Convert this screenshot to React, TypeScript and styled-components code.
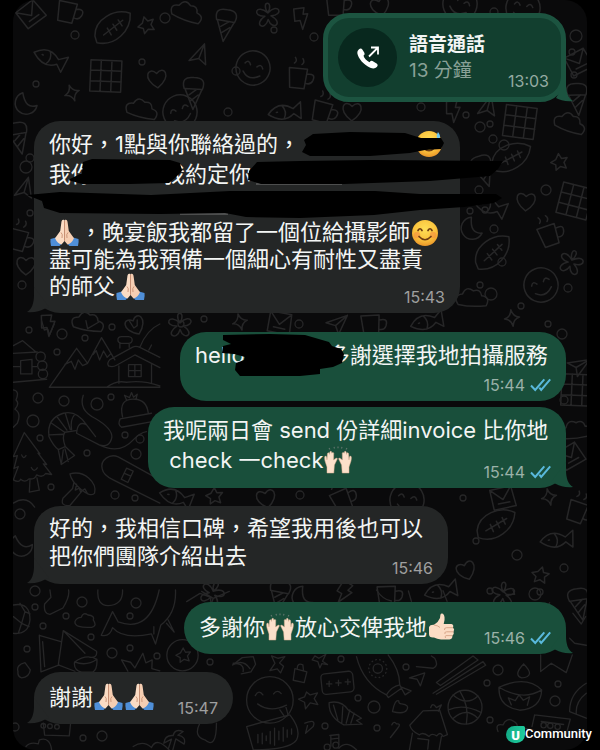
import React from "react";
import styled, { createGlobalStyle } from "styled-components";

const GREEN = "#194f3b";
const GREY = "#242626";

const GlobalStyle = createGlobalStyle`
  body {
    margin: 0;
    background: #000;
    font-family: Inter, "Noto Sans CJK TC", sans-serif;
    color: #f3f5f4;
  }
`;

const Screen = styled.main`
  position: relative;
  box-sizing: border-box;
  min-height: 100vh;
  padding: 0 13px;
  overflow: hidden;
`;

const Chat = styled.section`
  position: relative;
  box-sizing: border-box;
  min-height: 100vh;
  padding: 13px 21px 26px;
  border-radius: 22px;
  background: #0a0a0b;
  overflow: hidden;
  display: flex;
  flex-direction: column;
`;

const WallpaperArt = styled.svg`
  position: absolute;
  top: 0;
  left: 0;
  width: 100%;
  height: 100%;
  fill: none;
  stroke: #262627;
  stroke-width: 4;
  stroke-linecap: round;
  stroke-linejoin: round;
`;

const Bubble = styled.article<{ $mine?: boolean; $width: number; $gap?: number }>`
  position: relative;
  box-sizing: border-box;
  display: grid;
  width: ${(p) => p.$width}px;
  max-width: 100%;
  margin-top: ${(p) => p.$gap ?? 18}px;
  padding: 8px 15px 6px;
  align-self: ${(p) => (p.$mine ? "flex-end" : "flex-start")};
  border-radius: 26px;
  background: ${(p) => (p.$mine ? GREEN : GREY)};
`;

const Text = styled.p<{ $top?: number; $bottom?: number }>`
  grid-area: 1 / 1;
  margin: 0;
  padding-top: ${(p) => p.$top ?? 0}px;
  padding-bottom: ${(p) => p.$bottom ?? 8}px;
  font-size: 22px;
`;

const Line = styled.span<{ $height?: number }>`
  display: flex;
  align-items: center;
  height: ${(p) => p.$height ?? 30}px;
  line-height: ${(p) => p.$height ?? 30}px;
  white-space: pre;
`;

const Hidden = styled.span<{ $width: number }>`
  flex: none;
  width: ${(p) => p.$width}px;
`;

const Meta = styled.footer`
  grid-area: 1 / 1;
  place-self: end;
  display: flex;
  align-items: center;
  gap: 5px;
  font-size: 16px;
  line-height: 20px;
  color: rgba(255, 255, 255, 0.57);
`;

const TailSvg = styled.svg<{ $left?: boolean }>`
  position: absolute;
  bottom: 0;
  ${(p) => (p.$left ? "left: -7px; transform: scaleX(-1);" : "right: -7px;")}
`;

const EmojiSvg = styled.svg`
  flex: none;
  margin: 0 1px;
`;

const Ink = styled.svg`
  position: absolute;
  top: 0;
  left: 0;
  overflow: visible;
`;

const CallCard = styled.article`
  position: relative;
  box-sizing: border-box;
  align-self: flex-end;
  display: flex;
  align-items: center;
  gap: 12px;
  width: 243px;
  height: 89px;
  padding: 0 12px 0 10px;
  border: 5px solid #1c5440;
  border-radius: 26px;
  background: #123f2f;
`;

const CallButton = styled.button`
  flex: none;
  display: grid;
  place-items: center;
  width: 59px;
  height: 59px;
  padding: 0;
  border: 0;
  border-radius: 50%;
  background: #08281e;
`;

const CallInfo = styled.div`
  flex: 1;
`;

const CallTitle = styled.h1`
  margin: 0;
  font-size: 19px;
  font-weight: 700;
  line-height: 27px;
`;

const CallLength = styled.p`
  margin: 0;
  font-size: 19px;
  line-height: 26px;
  color: #89a197;
`;

const CallTime = styled.time`
  align-self: flex-end;
  margin-bottom: 6px;
  font-size: 16px;
  line-height: 20px;
  color: #94aaa1;
`;

const CallTailSvg = styled.svg`
  position: absolute;
  right: -12px;
  bottom: -5px;
`;

const Brand = styled.a`
  position: absolute;
  right: 8px;
  bottom: 6px;
  display: flex;
  align-items: center;
  color: #fff;
  font-family: Roboto, sans-serif;
  font-size: 13px;
  font-weight: 500;
  line-height: 20px;
  text-decoration: none;
`;

const BrandMark = styled.span`
  display: grid;
  place-items: center;
  width: 19px;
  height: 17px;
  border-radius: 10px 2px 10px 10px;
  background: linear-gradient(100deg, #12a884, #20d0a0);
  font-size: 13px;
  font-weight: 900;
`;

function Tail({ left, color }: { left?: boolean; color: string }) {
  return (
    <TailSvg $left={left} width="22" height="26" viewBox="0 0 22 26" fill={color} aria-hidden="true">
      <path d="M15 0V8C15 16 17 22 22 25C15 26 9 24 5 22L0 20Z" />
    </TailSvg>
  );
}

function CallTail() {
  return (
    <CallTailSvg width="22" height="26" viewBox="0 0 22 26" fill="#1c5440" aria-hidden="true">
      <path d="M15 0V8C15 16 17 22 22 25C15 26 9 24 5 22Q10 16 10 0Z" />
    </CallTailSvg>
  );
}

function Ticks() {
  return (
    <svg width="21" height="14" viewBox="0 0 21 14" fill="none" stroke="#59b9dc" strokeWidth="2" aria-label="已讀">
      <path d="M1 7.5L5.2 12L14.3 1.3M9.3 9.7L11.2 12L20.2 1.3" />
    </svg>
  );
}

function Pray() {
  return (
    <EmojiSvg width="29" height="28" viewBox="0 0 29 28" role="img" aria-label="合十">
      <path d="M0.5 20L6 18.5L12 24.5L9.5 27H1Q0 23 .5 20Z" fill="#4f8fd8" />
      <path d="M28.5 20L23 18.5L17 24.5L19.5 27H28Q29 23 28.5 20Z" fill="#4f8fd8" />
      <path d="M14.4 1C12 0 11.5 2 11.3 4L10.2 12L5 19.2Q7.5 24.5 11.5 25.5L14.5 22Z" fill="#fbdcc4" />
      <path d="M14.6 1C17 0 17.5 2 17.7 4L18.8 12L24 19.2Q21.5 24.5 17.5 25.5L14.5 22Z" fill="#f6ceb2" />
      <path d="M14.5 2V21.5M11 13.5Q13 15 12 19M18 13.5Q16 15 17 19" fill="none" stroke="#c88d70" strokeWidth=".9" />
    </EmojiSvg>
  );
}

function Smile({ sweat }: { sweat?: boolean }) {
  return (
    <EmojiSvg width="28" height="28" viewBox="0 0 28 28" role="img" aria-label={sweat ? "苦笑" : "微笑"}>
      <defs>
        <radialGradient id={sweat ? "face-b" : "face-a"} cx=".5" cy=".35" r=".65">
          <stop offset="0" stopColor="#ffdf57" />
          <stop offset=".65" stopColor="#fbc23c" />
          <stop offset="1" stopColor="#e9962a" />
        </radialGradient>
      </defs>
      <circle cx="14" cy="14" r="13" fill={sweat ? "url(#face-b)" : "url(#face-a)"} />
      <circle cx="6" cy="16" r="3.2" fill="#f4883f" opacity=".55" />
      <circle cx="22" cy="16" r="3.2" fill="#f4883f" opacity=".55" />
      <path
        d="M7 11.5Q9 8 11 11.5M17 11.5Q19 8 21 11.5M8 17.5Q14 24 20 17.5"
        fill="none"
        stroke="#6f3d12"
        strokeWidth="1.7"
        strokeLinecap="round"
      />
      {sweat && <path d="M23 2Q27 7 23.5 8.5Q20 8 23 2Z" fill="#6dc8f2" />}
    </EmojiSvg>
  );
}

function RaisedHands() {
  const hand =
    "M3 27V21L1 15Q0 10 1.6 10Q2.8 10 3 14L3.4 8Q3.6 6.6 4.6 6.8Q5.5 7 5.5 8.4L5.7 6.4Q6 5 7 5.3Q7.8 5.5 7.7 7L8 7.2Q8.4 6.2 9.2 6.5Q10 7 9.7 8.3L9.6 14L11.6 12.4Q13.6 11.5 13.3 13L10.4 19L9.8 27Z";
  return (
    <EmojiSvg width="28" height="28" viewBox="0 0 28 28" role="img" aria-label="舉手">
      <g fill="#fbe0ca" stroke="#dcae91" strokeWidth=".5">
        <path d={hand} />
        <path d={hand} transform="matrix(-1 0 0 1 28 0)" />
      </g>
      <path d="M6 3.5L5 2M10.5 2.5L10 .8M14 2.3V.5M17.5 2.5L18 .8M22 3.5L23 2" stroke="#62766e" strokeWidth="1.1" />
    </EmojiSvg>
  );
}

function ThumbsUp() {
  return (
    <EmojiSvg width="27" height="28" viewBox="0 0 27 28" role="img" aria-label="讚好">
      <path
        d="M1 14Q2 11.5 6 11.8Q10.5 9 12 5L12.4 1.8Q13 0 15 .8Q17.6 3.3 16 9.5L15.7 11H23.5Q26 11.8 25 14.5Q27 16.4 25.5 18.7Q26.5 21 24.4 22.6Q24.8 26 21.5 26.5H13Q9 26.2 6 24.5Q1 25 1 21Z"
        fill="#fbdcc4"
      />
      <path d="M25 14.7H18.5Q16 14.8 16.5 17M25.4 18.8H18.5Q16 19 17 21M24.3 22.6H18Q16.5 23 17.5 25M6 12Q10 12.5 12 14.5" fill="none" stroke="#d5a184" strokeWidth=".9" />
    </EmojiSvg>
  );
}

const dots: [number, number, number][] = [
  [29, 330, 3], [62, 334, 5], [85, 338, 3], [112, 327, 3], [57, 352, 3], [38, 398, 5], [64, 401, 5],
  [97, 404, 6], [111, 397, 3], [33, 421, 6], [40, 438, 3], [125, 435, 3], [140, 439, 4], [136, 454, 5],
  [87, 453, 3], [51, 487, 3], [115, 495, 4], [135, 498, 3], [82, 602, 5], [35, 607, 3], [66, 616, 3],
  [43, 626, 3], [136, 603, 5], [130, 616, 3], [27, 649, 3], [112, 653, 5], [130, 648, 3], [91, 637, 3],
  [157, 656, 3], [210, 662, 3], [341, 659, 3], [406, 667, 3], [498, 670, 5], [558, 684, 3], [555, 701, 5],
  [374, 707, 6], [358, 698, 3], [487, 683, 3], [325, 726, 3], [377, 728, 3], [490, 720, 3], [102, 736, 5],
  [83, 738, 3], [15, 727, 4], [540, 592, 3], [535, 594, 6], [490, 591, 3], [576, 36, 6], [572, 52, 3],
  [574, 75, 3], [494, 12, 4], [314, 37, 4], [421, 107, 4], [30, 213, 3], [30, 158, 4], [26, 167, 6],
  [480, 127, 5], [490, 124, 3], [466, 115, 3], [493, 139, 4], [504, 145, 5], [479, 190, 4], [470, 211, 3],
  [485, 210, 3], [480, 285, 3], [491, 294, 6], [494, 229, 4], [502, 262, 4], [562, 334, 5], [548, 324, 3],
  [564, 400, 4], [521, 306, 3], [546, 190, 5], [568, 288, 4], [517, 555, 5], [476, 541, 3], [564, 568, 4],
  [20, 514, 5], [35, 591, 5], [300, 495, 4], [463, 498, 3], [181, 324, 3], [204, 319, 3], [299, 324, 4],
  [228, 112, 4], [165, 18, 5], [142, 62, 3], [75, 35, 4], [236, 71, 4], [274, 30, 3], [36, 84, 3], [22, 285, 4],
];

const star = "M0 -22L7 -9L22 -10L13 2L18 17L3 12L-9 21L-9 7L-22 0L-8 -7Z";
const spark = "M0 -22Q3 -3 20 0Q3 3 0 22Q-3 3 -20 0Q-3 -3 0 -22Z";
const bolt = "M-12 -28L15 -24L8 -8L20 -6L-4 30L-4 6L-18 4Z";
const heart = "M0 26C-42 -2 -20 -34 0 -12C20 -34 42 -2 0 26Z";
const moon = "M-5 -28A29 29 0 1 0 28 10Q-4 17 -5 -28Z";
const cloud = "M-35 20Q-52 -3 -26 -8Q-18 -32 2 -19Q20 -27 25 -8Q49 -7 39 17Q0 25 -35 20Z";
const plane = "M-26 4L26 -25L12 28L0 7ZM0 7L26 -25";
const box = "M-35 -20L20 -32L35 20L-23 32ZM-35 -20L0 4L20 -32M-12 16L18 10";
const face = "M45 0A45 45 0 1 1 -45 0A45 45 0 1 1 45 0M-24 -6Q-17 -19 -9 -6M9 -6Q17 -19 25 -6M-22 16Q0 37 24 14";
const flower = "M0 -8C-20 -42 20 -42 0 -8C30 -36 44 0 8 0C42 20 10 42 0 9C-10 42 -42 20 -8 0C-44 0 -30 -36 0 -8Z";
const football = "M-48 20C-48 -25 5 -52 46 -38C48 8 5 49 -43 38ZM-25 18L26 -20M-15 0L-5 18M0 -10L10 6M14 -21L24 -5";
const cup = "M-28 -25H20L16 27H-22ZM20 -12Q44 -17 37 3Q32 16 18 12M-16 -38Q-8 -44 -15 -53M4 -36Q12 -43 5 -52";
const fish = "M-42 0Q-10 -34 25 -5L47 -20L42 24L25 8Q-5 32 -42 0M-20 -2H-17M-2 -16Q9 0 -2 17";
const cone = "M-22 -8L3 46L23 -8ZM-24 -8Q-35 -40 0 -38Q35 -40 24 -8M-10 8L10 -8M-5 24L14 7";
const grid = "M-45 -37L36 -45L44 37L-37 45ZM-18 -40L-10 42M10 -42L18 39M-42 -10L39 -18M-39 18L42 10";

const figures: [string, number, number][] = [
  [box, 31, 14], [cup, 68, 12], [football, 113, 28], [star, 146, 25], [cloud, 187, 12], [cone, 225, 24],
  [flower, 268, 16], [bolt, 301, 18], [fish, 49, 58], [grid, 106, 76], [heart, 157, 78], [plane, 198, 56],
  [face, 253, 68], [cup, 299, 78], [moon, 26, 103], [spark, 72, 93], [cloud, 142, 109], [cone, 193, 92],
  [fish, 284, 112], [face, 180, 112], [cup, 323, 112], [heart, 352, 111], [bolt, 453, 111],
  [plane, 486, 108], [grid, 520, 122], [cup, 337, 5], [heart, 380, 6], [face, 460, 4], [face, 523, 8],
  [cone, 577, 98], [box, 579, 62], [cloud, 570, 123], [football, 511, 158], [star, 559, 162], [cone, 483, 170],
  [grid, 575, 201], [moon, 472, 228], [football, 493, 253], [cup, 550, 235], [flower, 571, 263],
  [cloud, 472, 298], [spark, 512, 318], [face, 541, 285], [fish, 489, 206], [heart, 526, 201],
  [cone, 18, 137], [plane, 23, 190], [cup, 19, 240], [heart, 26, 265], [bolt, 48, 325],
  [heart, 135, 325], [cloud, 88, 322], [flower, 180, 326], [spark, 240, 322], [box, 280, 323],
  [plane, 336, 323], [cup, 372, 325], [fish, 426, 322], [plane, 577, 365], [grid, 577, 390],
  [cloud, 576, 430], [box, 571, 456], [cup, 578, 512], [football, 496, 525], [fish, 556, 540],
  [heart, 466, 570], [star, 540, 575], [flower, 503, 595], [cone, 579, 603], [moon, 21, 545],
  [fish, 175, 497], [star, 214, 496], [heart, 266, 498], [cup, 343, 500], [face, 407, 500],
  [box, 503, 498], [spark, 549, 497], [flower, 212, 594], [cone, 279, 595], [cup, 388, 596],
  [fish, 440, 591], [bolt, 344, 592], [moon, 303, 597],
];

function Wallpaper() {
  return (
    <WallpaperArt viewBox="13 0 574 750" preserveAspectRatio="xMidYMin slice" aria-hidden="true">
      {dots.map(([x, y, r], i) => (
        <circle key={i} cx={x} cy={y} r={r} strokeWidth="1.3" />
      ))}
      {figures.map(([d, x, y], i) => (
        <path key={i} d={d} transform={`translate(${x} ${y}) rotate(${((i * 37) % 50) - 25}) scale(.38)`} />
      ))}
      <g transform="translate(0 320) scale(.333)">
        <path d="M148 202L230 85L263 130L305 53L345 120M195 133L214 124L225 148L235 120L248 137L263 130M280 103L289 92L299 120L311 93L322 112L333 101M148 202H480M326 138Q320 130 330 119L397 82Q408 76 420 82L480 112M326 138Q338 143 350 136L405 105L480 143M357 138V190M455 134V189M386 134H424V170H386ZM405 134V170M386 152H424M360 84V70M388 71V82M354 60Q354 50 365 50H386Q397 51 397 60Q396 70 386 70H364Q354 68 354 60M320 202Q350 180 380 187Q430 180 480 198M420 82Q440 30 480 12M447 90L455 75" />
        <path d="M40 100L112 96M40 77L68 62L108 96M40 187L140 178M62 122L96 118V162H62ZM40 140H62M96 140H110" />
        <circle cx="122" cy="110" r="14" /><circle cx="127" cy="137" r="14" /><circle cx="129" cy="162" r="14" />
        <path d="M250 226Q235 270 285 295Q337 325 336 352Q330 385 298 375L230 340Q233 300 260 315L287 350M298 375Q360 405 400 360Q420 338 440 335M260 315Q230 270 190 280Q140 295 147 350Q160 378 175 389L196 380Q185 350 195 337L228 332M155 310L194 337M171 290L201 331M196 280L211 329M224 284Q210 300 215 329M149 345L190 343M175 389L184 434L224 407L196 380M184 434L190 390M205 425L195 387" />
        <path d="M361 297L455 280M361 297Q352 314 365 322L457 305M368 291Q355 235 405 238Q440 240 445 278M380 240L374 226L389 233L395 218L401 232L412 223L408 239" />
        <path d="M73 338L40 410L52 407L42 446L55 440L40 480Q58 490 62 478Q75 490 87 477Q105 480 110 465Q128 475 137 461L155 464L130 432L140 434L114 400L120 402ZM90 482L88 517L118 511L111 474M65 405Q70 420 78 407M94 443Q102 460 112 444" />
        <path d="M307 447C300 420 330 400 355 411L480 480M307 447Q310 466 340 480L480 550M380 445L400 454L384 488L364 478ZM372 460L393 469" />
        <path d="M210 462C255 450 292 490 284 520C270 540 215 490 210 462ZM222 488L218 506L189 535Q180 560 210 557L246 514M230 493L226 511L238 505L242 516L255 507L263 522" />
        <path d="M125 2L133 30L143 27L149 44L163 12M258 2L263 26L297 6M388 2L402 24L412 17V0M40 210Q60 213 48 240Q60 250 45 268Q65 280 52 310L40 322M40 550Q80 525 104 562" />
      </g>
      <g transform="translate(170 590) scale(.333)">
        <path d="M50 35L90 10L130 25L178 4M95 4L130 25L125 38M620 0Q640 30 665 33M716 3L725 34M820 2L832 34M1000 3L1010 13H1035L1030 0M1115 40Q1130 60 1140 38" />
        <path d="M305 198L325 205L345 200L329 219L341 229L332 249L322 237L300 242L315 220ZM435 198L447 205L468 193L458 214L473 224L456 221L450 234L444 215L427 210ZM375 236L411 246L403 278L370 271ZM382 237Q382 217 399 225L401 243M188 225L217 203L250 200L257 223L243 246L214 252M188 225Q220 206 240 236" />
        <circle cx="300" cy="330" r="70" />
        <path d="M256 317Q267 297 279 315M311 312Q322 297 334 311M263 342Q300 370 350 346M330 360L343 379Q358 382 352 365L347 348M410 306L421 315L443 309L433 326L444 344L421 339L407 357L404 337L386 328L404 321Z" />
        <rect x="455" y="248" width="96" height="62" rx="12" transform="rotate(-6 500 280)" />
        <path d="M470 282H486M478 274V290M498 279H514M506 271V287M526 276H542M534 268V284M560 200Q580 280 650 315Q665 290 690 285Q690 240 655 195M650 315L656 323L695 295L690 285M695 295L706 315L724 303L695 292" />
        <circle cx="624" cy="236" r="14" /><circle cx="624" cy="236" r="27" strokeDasharray="2 10" />
        <path d="M719 264L765 249L752 288L742 268ZM740 230L790 235Q808 228 795 205L785 198M800 278L910 198L925 210L812 287ZM790 310L940 215L948 226L800 313M1113 195V245L1145 220L1190 248L1208 195M230 410L360 375Q395 420 380 450Q360 480 250 480ZM264 434V459M277 430V462M289 438V452M301 425V462M314 415V466M327 424V450M340 413V454M352 420V442M365 417V433M478 338Q515 330 535 360L575 385L560 392L577 403L522 405Q475 380 478 338ZM491 346L504 390M519 350L516 398M540 360L529 400M553 370L543 400M668 365Q675 328 687 333Q687 343 696 342Q720 345 711 360Q703 374 668 365ZM405 400Q440 385 430 410L407 430L413 407M666 405Q673 392 680 402Q696 400 683 416L662 443M720 406L760 363L810 361L833 434L820 440Q812 423 801 438Q785 428 778 440Q760 425 749 435Q725 425 720 406ZM728 430L719 480M815 440L808 480M744 446L777 450L774 478M783 353Q788 335 800 353L815 345L806 364" />
        <circle cx="886" cy="352" r="51" /><path d="M850 315Q890 350 925 318M836 360Q880 340 935 368M870 303Q900 350 890 402M850 386Q890 350 924 385" />
        <path d="M1062 222Q1030 255 1056 264Q1100 260 1062 222M988 292Q985 350 1050 361Q1115 355 1116 300Q1070 255 988 292ZM988 292Q1060 335 1116 300M1025 345L1016 324L1037 332L1048 315L1061 331L1080 321L1073 346M985 425Q975 400 1000 405Q1010 382 1030 393Q1045 400 1042 411L1090 420M1095 375L1202 388L1188 440M1095 375L1087 410M1115 395L1182 404M1200 365Q1200 310 1250 280M1200 365L1250 385M1220 370Q1218 335 1250 310M1210 70L1235 102L1248 80M1200 145L1215 160L1250 166M480 437L507 434V464M483 437V469M483 448L507 445M507 475Q530 450 560 480" />
        <circle cx="472" cy="472" r="9" /><circle cx="498" cy="466" r="9" /><circle cx="1122" cy="406" r="8" /><circle cx="1142" cy="408" r="8" /><circle cx="1164" cy="411" r="8" />
      </g>
      <g transform="translate(0 590) scale(.333)">
        <path d="M150 0L153 22L134 42Q130 72 150 73L189 54Q210 20 206 0M294 0Q290 47 325 47Q370 45 368 0M304 136L338 65L355 96Q450 130 478 0M304 136Q330 142 338 113Q370 150 455 132L467 162L483 105Q530 70 527 0M462 110V132M500 100L523 126L505 90M225 95Q230 82 244 82Q250 65 264 75Q285 76 280 90Q293 109 275 112Q224 115 225 95M118 136L183 155M118 136L123 246L178 225M128 155L134 230M190 122L175 225L225 244M190 122L290 184Q293 205 269 202M190 122L255 190M224 216Q220 240 245 247H278Q293 239 291 208M224 216Q260 190 291 208Q260 230 224 216M54 245Q48 225 75 218L91 240Q88 262 65 264Q52 260 54 245M40 45Q90 35 90 90Q85 135 40 130M60 40L75 65L90 72M75 65L65 100L87 110M40 80L65 100M65 100L55 130M365 210L392 217L405 234L429 190L438 219L457 210L456 236L480 243M365 210L384 244M700 220Q735 220 730 245M130 400L134 436L208 438L212 400M600 400Q580 440 615 450Q650 480 650 400M78 470Q90 455 115 462L118 450Q150 440 155 480M0 420Q20 400 32 420M400 470Q430 450 455 473Q470 440 508 480M505 478L515 448L492 460Q495 435 520 437Q525 415 550 425L534 436Q560 440 553 463L528 447L519 480" />
        <circle cx="548" cy="196" r="47" /><path d={star} transform="translate(550 196)" />
        <circle cx="130" cy="408" r="7" /><circle cx="150" cy="409" r="7" /><circle cx="171" cy="411" r="7" />
      </g>
    </WallpaperArt>
  );
}

export default function App() {
  return (
    <>
      <GlobalStyle />
      <Screen>
        <Chat>
          <Wallpaper />
          <CallCard>
            <CallButton aria-label="語音通話">
              <svg width="24" height="24" viewBox="0 0 24 24" fill="none" aria-hidden="true">
                <path d="M3 3.2Q5 1.5 6.5 3.7L8.5 7Q9.1 8.4 7.5 9.8Q8.5 13.5 13.5 16.3Q15 14.4 16.5 15L20.6 17.5Q22.6 19 20.8 21Q18.5 23.5 14.2 21.7C8 19 2 12.5 1.3 7Q1.1 4.6 3 3.2Z" fill="#fff" />
                <path d="M13 10.5L22 1.5M15 1.5H22V8.5" stroke="#fff" strokeWidth="1.8" />
              </svg>
            </CallButton>
            <CallInfo>
              <CallTitle>語音通話</CallTitle>
              <CallLength>13 分鐘</CallLength>
            </CallInfo>
            <CallTime>13:03</CallTime>
            <CallTail />
          </CallCard>

          <Bubble $width={426} $gap={19}>
            <Tail left color={GREY} />
            <Text $bottom={7}>
              <Line>你好，1點與你聯絡過的，<Hidden $width={114} /><Smile sweat /></Line>
              <Line>我你<Hidden $width={70} />我約定你</Line>
              <Line />
              <Line $height={27}><Pray />，晚宴飯我都留了一個位給攝影師<Smile /></Line>
              <Line $height={27}>盡可能為我預備一個細心有耐性又盡責</Line>
              <Line $height={27}>的師父<Pray /></Line>
            </Text>
            <Ink width="426" height="192" viewBox="34 121 426 192" aria-hidden="true">
              <path d="M256 184H342M180 214H228" stroke="#777" strokeWidth="1" />
              <path d="M302 152L306 145L304 140L313 134L350 132L405 133L421 138L441 138L444 143L441 149L425 150L410 153L370 156L310 156Z" />
              <path d="M68 180L82 173L83 162L92 159L170 160L180 163L182 171L175 178L169 183L130 184L82 184Z" />
              <path d="M249 171L257 162L300 161L372 160L503 161L498 169L490 176L430 181L344 184L261 184L248 180Z" />
              <path d="M27 195L60 192L151 195L230 191L300 191L375 191L420 194L496 194L502 198L494 203L464 207L420 210L374 215L300 218L246 217L225 213L160 214L60 213L44 208L42 201Z" />
            </Ink>
            <Meta><time>15:43</time></Meta>
          </Bubble>

          <Bubble $mine $width={386} $gap={19}>
            <Text $bottom={25}>
              <Line>hello<Hidden $width={83} />多謝選擇我地拍攝服務</Line>
            </Text>
            <Ink width="386" height="69" viewBox="180 332 386 69" aria-hidden="true">
              <path d="M223 335L270 334L305 335L329 342L332 346L341 349L344 354L342 363L333 367L320 369V374L300 376L240 376L235 370L236 363L244 360L245 357L234 354L222 353L223 346L231 344L223 340Z" />
            </Ink>
            <Meta><time>15:44</time><Ticks /></Meta>
          </Bubble>

          <Bubble $mine $width={418} $gap={6}>
            <Tail color={GREEN} />
            <Text $bottom={7}>
              <Line>我呢兩日會 send 份詳細invoice 比你地</Line>
              <Line>{" check 一check"}<RaisedHands /></Line>
            </Text>
            <Meta><time>15:44</time><Ticks /></Meta>
          </Bubble>

          <Bubble $width={414}>
            <Tail left color={GREY} />
            <Text>
              <Line $height={28}>好的，我相信口碑，希望我用後也可以</Line>
              <Line $height={28}>把你們團隊介紹出去</Line>
            </Text>
            <Meta><time>15:46</time></Meta>
          </Bubble>

          <Bubble $mine $width={382}>
            <Tail color={GREEN} />
            <Text $top={2} $bottom={6}>
              <Line>多謝你<RaisedHands />放心交俾我地<ThumbsUp /></Line>
            </Text>
            <Meta><time>15:46</time><Ticks /></Meta>
          </Bubble>

          <Bubble $width={199}>
            <Tail left color={GREY} />
            <Text $top={2} $bottom={6}>
              <Line>謝謝<Pray /><Pray /></Line>
            </Text>
            <Meta><time>15:47</time></Meta>
          </Bubble>
        </Chat>
        <Brand href="#community"><BrandMark>U</BrandMark>Community</Brand>
      </Screen>
    </>
  );
}
